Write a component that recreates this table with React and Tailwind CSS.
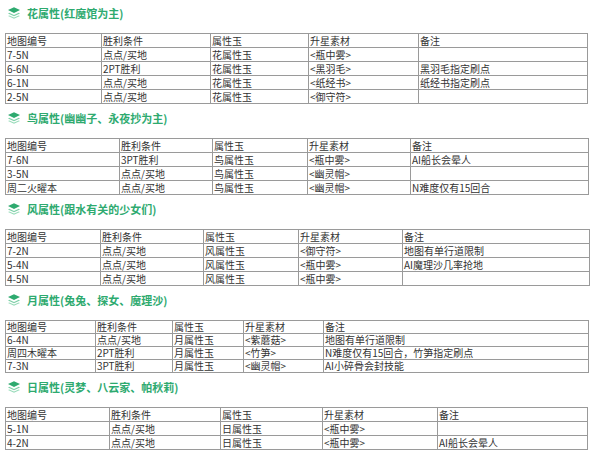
const sections = [
  {
    title: "花属性(红魔馆为主)",
    cols: [96, 109, 98, 110, 169],
    rows: [
      ["7-5N", "点点/买地", "花属性玉", "<瓶中雾>", ""],
      ["6-6N", "2PT胜利", "花属性玉", "<黑羽毛>", "黑羽毛指定刷点"],
      ["6-1N", "点点/买地", "花属性玉", "<纸经书>", "纸经书指定刷点"],
      ["2-5N", "点点/买地", "花属性玉", "<御守符>", ""],
    ],
  },
  {
    title: "鸟属性(幽幽子、永夜抄为主)",
    cols: [114, 93, 95, 103, 178],
    rows: [
      ["7-6N", "3PT胜利", "鸟属性玉", "<瓶中雾>", "AI船长会晕人"],
      ["3-5N", "点点/买地", "鸟属性玉", "<幽灵帽>", ""],
      ["周二火曜本", "点点/买地", "鸟属性玉", "<幽灵帽>", "N难度仅有15回合"],
    ],
  },
  {
    title: "风属性(跟水有关的少女们)",
    cols: [95, 103, 95, 104, 187],
    rows: [
      ["7-2N", "点点/买地", "风属性玉", "<御守符>", "地图有单行道限制"],
      ["5-4N", "点点/买地", "风属性玉", "<瓶中雾>", "AI魔理沙几率抢地"],
      ["4-5N", "点点/买地", "风属性玉", "<瓶中雾>", ""],
    ],
  },
  {
    title: "月属性(兔兔、探女、魔理沙)",
    cols: [90, 77, 71, 80, 265],
    compact: true,
    rows: [
      ["6-4N", "点点/买地", "月属性玉", "<紫蘑菇>", "地图有单行道限制"],
      ["周四木曜本", "2PT胜利", "月属性玉", "<竹笋>", "N难度仅有15回合，竹笋指定刷点"],
      ["7-3N", "3PT胜利", "月属性玉", "<幽灵帽>", "AI小碎骨会封技能"],
    ],
  },
  {
    title: "日属性(灵梦、八云家、帕秋莉)",
    cols: [104, 111, 102, 115, 150],
    rows: [
      ["5-1N", "点点/买地", "日属性玉", "<瓶中雾>", ""],
      ["4-2N", "点点/买地", "日属性玉", "<瓶中雾>", "AI船长会晕人"],
    ],
  },
];

const header = ["地图编号", "胜利条件", "属性玉", "升星素材", "备注"];

function LayersIcon() {
  return (
    <svg width="14" height="14" viewBox="0 0 14 14" className="shrink-0">
      <path d="M7 10.2 L1 7.4 L2.3 6.8 L7 9 L11.7 6.8 L13 7.4 Z" fill="#7fd0a8" />
      <path d="M7 12.8 L1 10 L2.3 9.4 L7 11.6 L11.7 9.4 L13 10 Z" fill="#9adcbb" />
      <path d="M7 1.2 L13 4 L7 7 L1 4 Z" fill="#2eaa6f" />
    </svg>
  );
}

function Section({ title, cols, rows, compact }) {
  return (
    <div>
      <div className="flex h-[20px] items-center gap-[6px] pl-[7px] mb-[10px]">
        <LayersIcon />
        <span className="text-[11px] font-semibold leading-[20px] text-[#2eaa6f]">{title}</span>
      </div>
      <table className="ml-[5px] table-fixed border-collapse border border-[#7a7a7a] text-[10px] text-[#333]">
        <colgroup>
          {cols.map((w, i) => (
            <col key={i} style={{ width: w }} />
          ))}
        </colgroup>
        <tbody>
          {[header, ...rows].map((r, i) => (
            <tr key={i}>
              {r.map((c, j) => (
                <td
                  key={j}
                  className={
                    compact
                      ? "h-[13px] border border-[#9a9a9a] p-0 pl-px leading-[12px] whitespace-nowrap"
                      : "h-[14px] border border-[#9a9a9a] p-0 pl-px leading-[13px] whitespace-nowrap"
                  }
                >
                  {c}
                </td>
              ))}
            </tr>
          ))}
        </tbody>
      </table>
    </div>
  );
}

export default function App() {
  return (
    <div
      className="flex w-[598px] flex-col gap-[4px] bg-white pt-[3px]"
      style={{ fontFamily: '"Noto Sans CJK SC", "Noto Sans", sans-serif' }}
    >
      {sections.map((s, i) => (
        <Section key={i} {...s} />
      ))}
    </div>
  );
}
